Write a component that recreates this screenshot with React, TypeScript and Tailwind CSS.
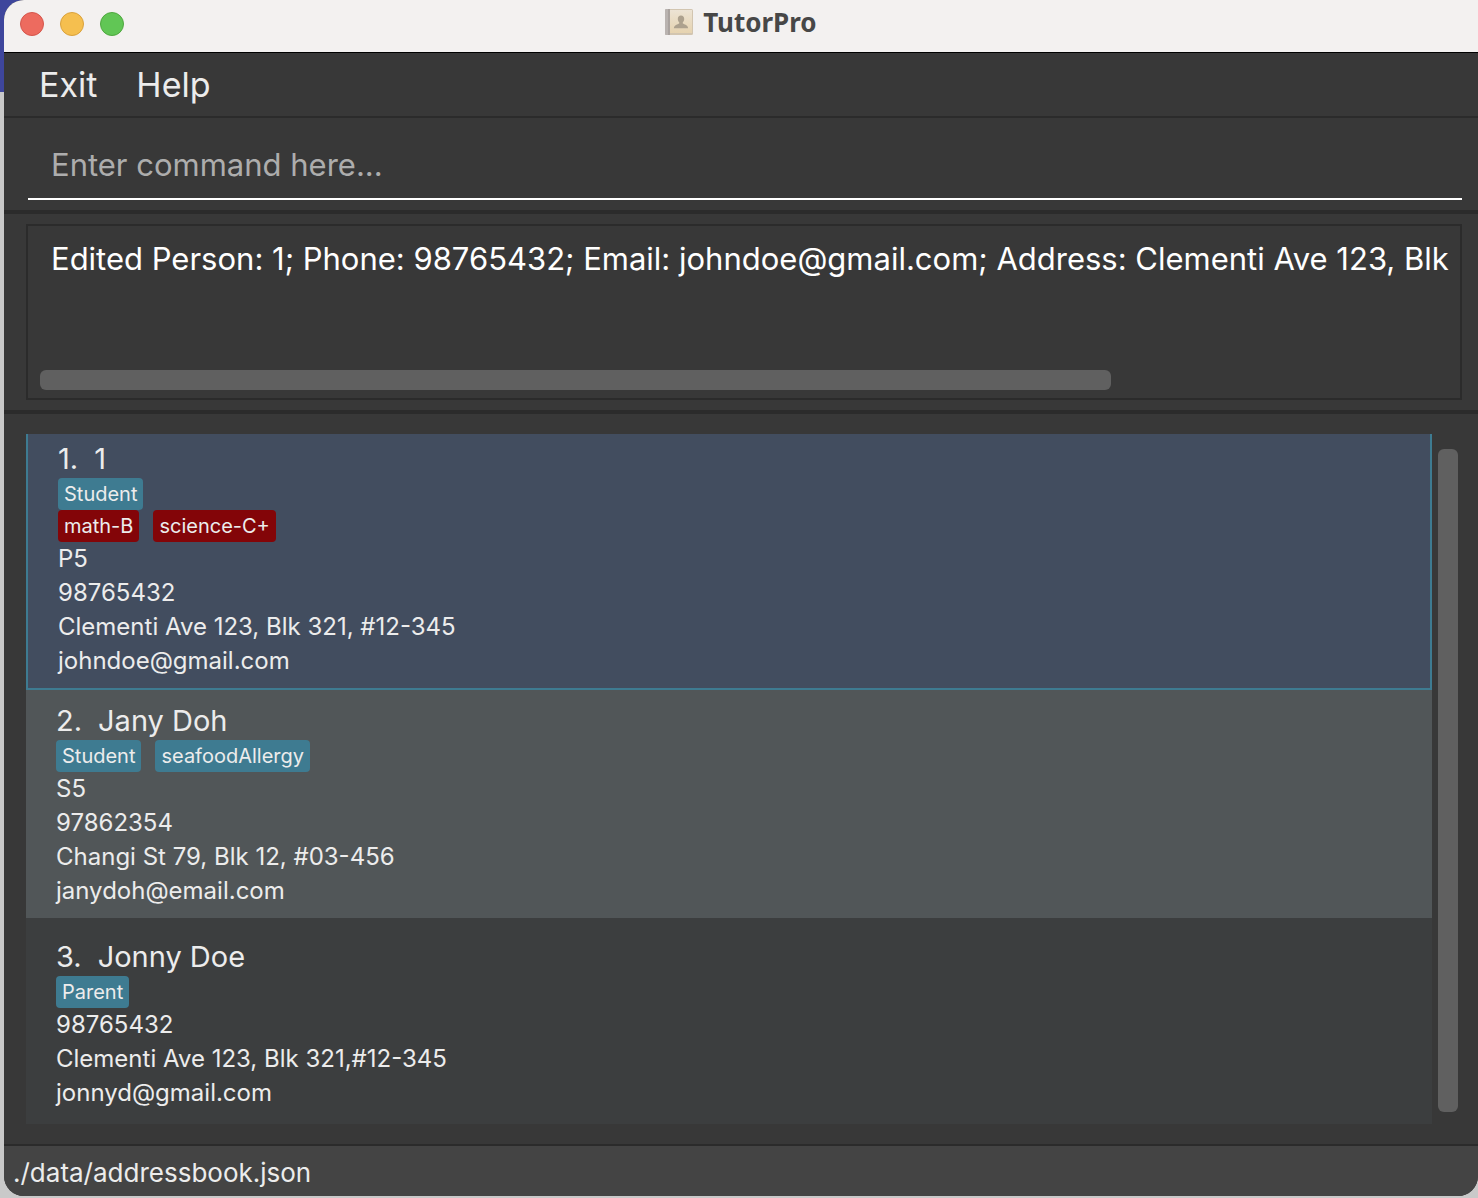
import React from "react";

type Tag = { label: string; tone: "teal" | "red" };
type Person = {
  name: string;
  tagRows: Tag[][];
  details: string[];
  card: string;
};

const people: Person[] = [
  {
    name: "1",
    tagRows: [
      [{ label: "Student", tone: "teal" }],
      [
        { label: "math-B", tone: "red" },
        { label: "science-C+", tone: "red" },
      ],
    ],
    details: ["P5", "98765432", "Clementi Ave 123, Blk 321, #12-345", "johndoe@gmail.com"],
    card: "border-x-2 border-b-2 border-[#3e7b91] bg-[#424d5f] pl-[30px] pt-1.5 pb-2.5",
  },
  {
    name: "Jany Doh",
    tagRows: [
      [
        { label: "Student", tone: "teal" },
        { label: "seafoodAllergy", tone: "teal" },
      ],
    ],
    details: ["S5", "97862354", "Changi St 79, Blk 12, #03-456", "janydoh@email.com"],
    card: "bg-[#515658] pl-[30px] pt-3 pb-2.5",
  },
  {
    name: "Jonny Doe",
    tagRows: [[{ label: "Parent", tone: "teal" }]],
    details: ["98765432", "Clementi Ave 123, Blk 321,#12-345", "jonnyd@gmail.com"],
    card: "bg-[#3c3e3f] pl-[30px] pt-5 pb-3.5",
  },
];

const tones = { teal: "bg-[#3e7b91]", red: "bg-[#830508]" };

function AddressBookIcon() {
  return (
    <svg width="28" height="26" viewBox="0 0 28 26" aria-hidden="true">
      <defs>
        <linearGradient id="cover" x1="0" y1="0" x2="0" y2="1">
          <stop offset="0" stopColor="#ece3d4" />
          <stop offset="1" stopColor="#e6d3b0" />
        </linearGradient>
      </defs>
      <rect x="0" y="0" width="28" height="26" rx="1.5" fill="#d2c5b0" />
      <rect x="0" y="0" width="5" height="26" rx="1" fill="#b9b3b0" />
      <rect x="3" y="0" width="2" height="26" fill="#a9a29e" />
      <rect x="5" y="1" width="22" height="23" fill="url(#cover)" />
      <path
        d="M16 6.500c-2 0-3.200 1.400-3.200 3.400 0 1.600.7 2.700 1.400 3.400v1.200c-1.500 1-5.100 1.500-5.300 4.700h14.200c-.2-3.200-3.800-3.700-5.300-4.700v-1.200c.7-.7 1.400-1.800 1.400-3.400C19.200 7.900 18 6.500 16 6.500z"
        fill="#ada18e"
      />
    </svg>
  );
}

function PersonCard({ person, index }: { person: Person; index: number }) {
  return (
    <li className={person.card}>
      <h2 className="flex gap-4 text-[29px] leading-[38px]">
        <span>{index}.</span>
        <span>{person.name}</span>
      </h2>
      {person.tagRows.map((row, i) => (
        <div key={i} className="flex gap-3.5">
          {row.map((tag) => (
            <span key={tag.label} className={`rounded px-1.5 text-[20px] leading-8 ${tones[tag.tone]}`}>
              {tag.label}
            </span>
          ))}
        </div>
      ))}
      {person.details.map((line) => (
        <p key={line} className="text-[24px] leading-[34px]">
          {line}
        </p>
      ))}
    </li>
  );
}

export default function App() {
  return (
    <div className="min-h-screen bg-[linear-gradient(#3e469c_0_92px,#c9c9c9_92px)] pb-0.5 pl-1 font-['Inter',sans-serif] text-[#ececec]">
      <div className="flex min-h-[calc(100vh-2px)] flex-col overflow-hidden rounded-[20px] rounded-tr-none bg-[#383838]">
        <header className="relative flex h-[53px] items-center justify-center border-b border-black bg-[#f3f1f0] pb-2">
          <div className="absolute left-4 top-3 flex gap-4">
            <button aria-label="Close" className="size-6 rounded-full border border-[#d4564c] bg-[#ed6b5f]" />
            <button aria-label="Minimize" className="size-6 rounded-full border border-[#d9a13c] bg-[#f5bf4f]" />
            <button aria-label="Zoom" className="size-6 rounded-full border border-[#4fa73f] bg-[#61c655]" />
          </div>
          <div className="flex items-center gap-2.5">
            <AddressBookIcon />
            <h1 className="font-['Noto_Sans',sans-serif] text-[26px] font-bold leading-8 text-[#474747]">TutorPro</h1>
          </div>
        </header>

        <nav className="flex h-[65px] items-center gap-[39px] border-b-2 border-[#2b2b2b] pl-[35px] text-[34px] leading-[44px]">
          <button>Exit</button>
          <button>Help</button>
        </nav>

        <div className="border-b-4 border-[#2b2b2b] pb-2.5 pl-6 pr-4 pt-3">
          <input
            type="text"
            aria-label="Command"
            placeholder="Enter command here..."
            className="block h-[70px] w-full border-b-2 border-white bg-transparent pl-[23px] text-[31px] text-white outline-none placeholder:text-[#adadad]"
          />
        </div>

        <div className="border-b-4 border-[#2b2b2b] py-2.5 pl-[22px] pr-4">
          <div className="h-44 border-2 border-[#2b2b2b] px-0.5 pt-3">
            <textarea
              readOnly
              wrap="off"
              aria-label="Result"
              className="block h-[132px] w-full resize-none overflow-hidden bg-transparent pl-[21px] text-[31px] leading-[42px] text-white outline-none"
              value="Edited Person: 1; Phone: 98765432; Email: johndoe@gmail.com; Address: Clementi Ave 123, Blk 321, #12-345"
            />
            <div className="ml-2.5 h-5 w-3/4 rounded-md bg-[#606060]" />
          </div>
        </div>

        <main className="flex flex-1 gap-1.5 py-5 pl-[22px] pr-5">
          <ul className="flex-1">
            {people.map((person, i) => (
              <PersonCard key={person.name} person={person} index={i + 1} />
            ))}
          </ul>
          <div className="mb-3 mt-[15px] w-5 rounded-md bg-[#606060]" />
        </main>

        <footer className="border-t-2 border-[#2b2b2b] bg-[#444444] pb-0.5 pl-[9px] pt-1.5 text-[26px] leading-[42px]">
          ./data/addressbook.json
        </footer>
      </div>
    </div>
  );
}
